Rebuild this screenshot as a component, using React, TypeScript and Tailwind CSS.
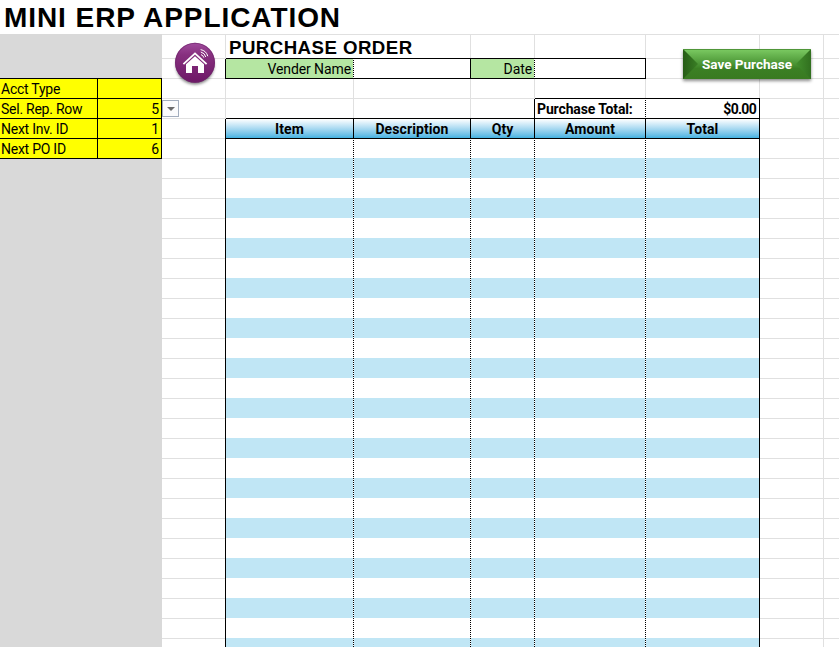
import React from "react";
import clsx from "clsx";

const font = "font-[Roboto,'Liberation_Sans',sans-serif]";
const dots = "bg-[repeating-linear-gradient(to_bottom,#fff_0_1px,#000_1px_2px)]";
const W = { a: "w-16", item: "w-32", desc: "w-[117px]", qty: "w-16", amt: "w-[111px]", tot: "w-[114px]", z: "w-16" };

type CellProps = {
  w: string;
  right?: "grid" | "black" | "dotted" | "none";
  bottom?: "grid" | "black";
  className?: string;
  children?: React.ReactNode;
};

function Cell({ w, right = "grid", bottom = "grid", className, children }: CellProps) {
  return (
    <div className={clsx("flex h-full shrink-0 flex-col", w)}>
      <div className="flex min-h-0 flex-1">
        <div className={clsx("flex min-w-0 flex-1 items-center whitespace-nowrap", className)}>{children}</div>
        {right !== "none" && (
          <div className={clsx("w-px shrink-0", right === "grid" && "bg-[#e0e0e0]", right === "black" && "bg-black", right === "dotted" && dots)} />
        )}
      </div>
      <div className="flex h-px shrink-0">
        <div className={clsx("flex-1", bottom === "black" ? "bg-black" : "bg-[#e0e0e0]")} />
        {right !== "none" && <div className={clsx("w-px", bottom === "black" || right === "black" ? "bg-black" : "bg-[#e0e0e0]")} />}
      </div>
    </div>
  );
}

function SideRow({ label, value }: { label: string; value: string }) {
  return (
    <div className="flex h-5 border-b border-black bg-[#ffff00] text-[14px]">
      <div className="flex w-[98px] items-center whitespace-nowrap border-r border-black pl-px pt-[2px] tracking-[-0.25px]">{label}</div>
      <div className="flex w-16 items-center justify-end border-r border-black pr-[2px] pt-[2px]">{value}</div>
    </div>
  );
}

function Tail() {
  return (
    <>
      <Cell w={W.z} />
      <Cell w="w-[15px]" right="none" />
    </>
  );
}

function HomeIcon() {
  return (
    <svg className="absolute left-[170px] top-[38px]" width="50" height="54" viewBox="0 0 50 54">
      <defs>
        <linearGradient id="orb" x1="0" y1="0" x2="0" y2="1">
          <stop offset="0" stopColor="#a04b9d" />
          <stop offset=".3" stopColor="#87307f" />
          <stop offset="1" stopColor="#6d1766" />
        </linearGradient>
        <filter id="soft" x="-30%" y="-30%" width="160%" height="160%">
          <feGaussianBlur stdDeviation="1.8" />
        </filter>
      </defs>
      <circle cx="25" cy="27.5" r="19" fill="#000" opacity=".5" filter="url(#soft)" />
      <circle cx="25" cy="24.7" r="20" fill="url(#orb)" />
      <circle cx="25" cy="24.7" r="19.4" fill="none" stroke="#6c2769" strokeWidth="1" opacity=".6" />
      <path d="M13.4 26.2 25 15.4 36.6 26.2" fill="none" stroke="#fff" strokeWidth="1.8" />
      <path d="M16 26.3 25 18.3 34 26.3V35H28V28H22V35H16Z" fill="#fff" />
      <path d="M31 16.6a4 4 0 0 1 2.8 3M30.8 14a6.8 6.8 0 0 1 5 5M30.6 11.6a9.3 9.3 0 0 1 7.2 6.6" fill="none" stroke="#fff" strokeWidth="1" />
    </svg>
  );
}

function SaveButton() {
  return (
    <button className="absolute left-[683px] top-[49px] flex h-[30px] w-32 items-center justify-center shadow-[0_2px_3px_rgba(0,0,0,0.45)]">
      <svg className="absolute inset-0" width="128" height="30" viewBox="0 0 128 30">
        <defs>
          <linearGradient id="face" x1="0" y1="0" x2="0" y2="1">
            <stop offset="0" stopColor="#7ccb63" />
            <stop offset=".5" stopColor="#4a9434" />
            <stop offset=".65" stopColor="#3b8024" />
            <stop offset="1" stopColor="#397a21" />
          </linearGradient>
          <linearGradient id="left" x1="0" y1="0" x2="1" y2="0">
            <stop offset="0" stopColor="#265c16" />
            <stop offset="1" stopColor="#3a7f25" />
          </linearGradient>
          <linearGradient id="right" x1="0" y1="0" x2="1" y2="0">
            <stop offset="0" stopColor="#438f2d" />
            <stop offset="1" stopColor="#31701f" />
          </linearGradient>
        </defs>
        <path d="M0 0H128V30H0Z" fill="url(#face)" />
        <path d="M0 0 15 15 0 30Z" fill="url(#left)" />
        <path d="M128 0 113 15 128 30Z" fill="url(#right)" />
        <path d="M0 .5H128" stroke="#4f9638" />
      </svg>
      <span className="relative text-[13.5px] font-bold leading-5 text-white">Save Purchase</span>
    </button>
  );
}

const header = "justify-center pt-[2px] font-bold text-[14px] tracking-[0.1px] bg-linear-to-b from-white to-[#44b3e1]";
const columns: { w: string; right: "dotted" | "black" }[] = [
  { w: W.item, right: "dotted" },
  { w: W.desc, right: "dotted" },
  { w: W.qty, right: "dotted" },
  { w: W.amt, right: "dotted" },
  { w: W.tot, right: "black" },
];

export default function App() {
  return (
    <div className={clsx("relative flex h-[647px] w-[839px] flex-col overflow-hidden bg-white text-black", font)}>
      <h1 className="h-[34px] shrink-0 whitespace-nowrap pl-1 font-['Liberation_Sans',sans-serif] text-[28px] font-bold leading-[36px] tracking-[0.93px]">MINI ERP APPLICATION</h1>
      <div className="flex min-h-0 flex-1">
        <aside className="w-[162px] shrink-0 bg-[#d9d9d9] pt-11">
          <div className="border-t border-black">
            <SideRow label="Acct Type" value="" />
            <SideRow label="Sel. Rep. Row" value="5" />
            <SideRow label="Next Inv. ID" value="1" />
            <SideRow label="Next PO ID" value="6" />
          </div>
        </aside>
        <main className="flex w-[677px] shrink-0 flex-col border-t border-[#e0e0e0]">
          <div className="flex h-6 shrink-0">
            <Cell w={W.a} />
            <Cell w={W.item} right="none" bottom="black" className="pl-[3px] pt-[2px] font-['Liberation_Sans',sans-serif] text-[18.67px] font-bold tracking-[0.45px]">
              <h2>PURCHASE ORDER</h2>
            </Cell>
            <Cell w={W.desc} bottom="black" />
            <Cell w={W.qty} bottom="black" />
            <Cell w={W.amt} bottom="black" />
            <Cell w={W.tot} />
            <Tail />
          </div>
          <div className="flex h-5 shrink-0 text-[14px]">
            <Cell w={W.a} right="black" />
            <Cell w={W.item} right="dotted" bottom="black" className="justify-end bg-[#b5e6a2] pr-[2px] pt-[2px] tracking-[-0.1px]">Vender Name</Cell>
            <Cell w={W.desc} right="black" bottom="black" />
            <Cell w={W.qty} right="dotted" bottom="black" className="justify-end bg-[#b5e6a2] pr-[2px] pt-[2px] tracking-[-0.1px]">Date</Cell>
            <Cell w={W.amt} right="black" bottom="black" />
            <Cell w={W.tot} />
            <Tail />
          </div>
          <div className="flex h-5 shrink-0">
            <Cell w={W.a} />
            <Cell w={W.item} />
            <Cell w={W.desc} />
            <Cell w={W.qty} />
            <Cell w={W.amt} bottom="black" />
            <Cell w={W.tot} bottom="black" />
            <Tail />
          </div>
          <div className="flex h-5 shrink-0 text-[14px] font-bold">
            <Cell w={W.a} />
            <Cell w={W.item} bottom="black" />
            <Cell w={W.desc} bottom="black" />
            <Cell w={W.qty} right="black" bottom="black" />
            <Cell w={W.amt} right="dotted" bottom="black" className="pl-[2px] pt-[2px] tracking-[-0.13px]">Purchase Total:</Cell>
            <Cell w={W.tot} right="black" bottom="black" className="justify-end pr-[3px] pt-[2px] tracking-[-0.7px]">$0.00</Cell>
            <Tail />
          </div>
          <div className="flex h-5 shrink-0">
            <Cell w={W.a} right="black" />
            <Cell w={W.item} right="black" bottom="black" className={header}>Item</Cell>
            <Cell w={W.desc} right="black" bottom="black" className={header}>Description</Cell>
            <Cell w={W.qty} right="black" bottom="black" className={header}>Qty</Cell>
            <Cell w={W.amt} right="black" bottom="black" className={header}>Amount</Cell>
            <Cell w={W.tot} right="black" bottom="black" className={header}>Total</Cell>
            <Tail />
          </div>
          <div className="flex min-h-0 flex-1">
            <div className="w-16 shrink-0 border-r border-black">
              {Array.from({ length: 25 }, (_, i) => (
                <div key={i} className="h-5 border-b border-[#e0e0e0]" />
              ))}
            </div>
            {columns.map((c, n) => (
              <div key={n} className={clsx("flex shrink-0", c.w)}>
                <div className="flex-1">
                  {Array.from({ length: 26 }, (_, i) => (
                    <div key={i} className={clsx(i === 0 ? "h-[19px]" : "h-5", i % 2 ? "bg-[#c0e6f5]" : "bg-white")} />
                  ))}
                </div>
                <div className={clsx("w-px", c.right === "black" ? "bg-black" : dots)} />
              </div>
            ))}
            <div className="flex-1">
              {Array.from({ length: 26 }, (_, i) => (
                <div key={i} className="flex h-5">
                  <Tail />
                </div>
              ))}
            </div>
          </div>
        </main>
      </div>
      <HomeIcon />
      <SaveButton />
      <button className="absolute left-[162px] top-[100px] flex h-[17px] w-[17px] items-center justify-center border border-[#a3adbd] bg-[#fbfbfc]">
        <svg width="8" height="4" viewBox="0 0 8 4">
          <path d="M0 0H8L4 4Z" fill="#6b6b6b" />
        </svg>
      </button>
    </div>
  );
}
